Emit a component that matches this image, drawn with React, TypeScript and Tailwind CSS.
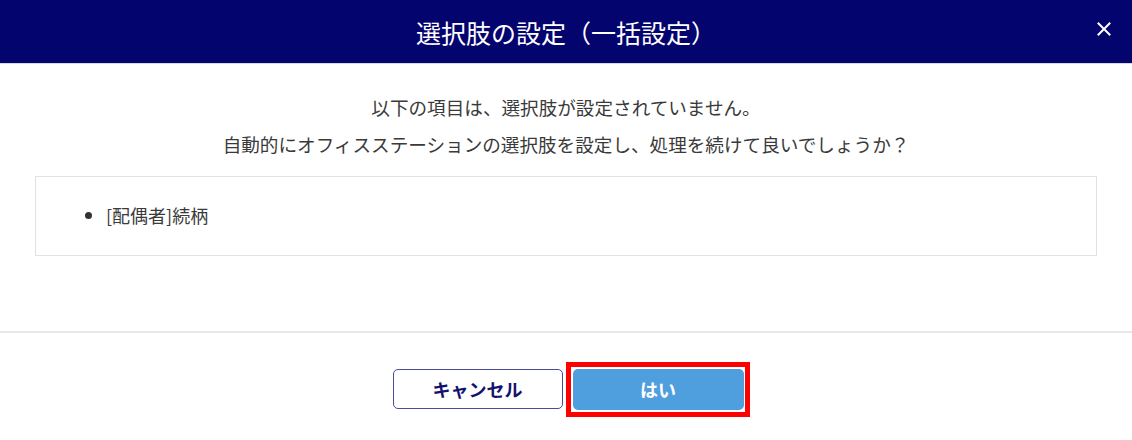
import React from "react";

export default function App() {
  const font = { fontFamily: '"Noto Sans CJK JP", "Noto Sans", sans-serif' };
  return (
    <div className="w-[1132px] h-[440px] bg-white flex flex-col" style={font}>
      <header className="relative h-[64px] bg-[#04046f] border-b border-[#d8d8e4] flex items-center justify-center">
        <h1 className="text-white text-[25px] leading-none pt-[1px]">選択肢の設定（一括設定）</h1>
        <button className="absolute right-[21px] top-[22px] w-[14px] h-[14px] flex items-center justify-center">
          <svg width="14" height="14" viewBox="0 0 14 14" fill="none">
            <path d="M1.5 1.5 L12.5 12.5 M12.5 1.5 L1.5 12.5" stroke="white" strokeWidth="2" strokeLinecap="square" />
          </svg>
        </button>
      </header>
      <div className="pt-[24px] text-center text-[#3a3a3a] text-[18.6px] leading-[37px]">
        <p>以下の項目は、選択肢が設定されていません。</p>
        <p>自動的にオフィスステーションの選択肢を設定し、処理を続けて良いでしょうか？</p>
      </div>
      <div className="px-[35px] pt-[14px]">
        <div className="h-[80px] border border-[#e2e2e2] flex items-center pl-[40px] pb-[2px]">
          <ul className="list-disc text-[#3a3a3a] text-[18px] leading-[26px] pl-[30px] marker:text-[#333]">
            <li>[配偶者]続柄</li>
          </ul>
        </div>
      </div>
      <div className="mt-[75px] h-[2px] bg-[#e8e8e8]" />
      <div className="pt-[36px] flex justify-center gap-[10px] pl-[4px]">
        <button className="w-[170px] h-[40px] rounded-[5px] border-[1.5px] border-[#4a4a9c] bg-white text-[#12126e] text-[18px] font-bold">
          キャンセル
        </button>
        <div className="relative">
          <button className="w-[171px] h-[41px] rounded-[5px] bg-[#4f9edd] text-white text-[18px] font-bold">
            はい
          </button>
          <div className="absolute -left-[7px] -top-[7px] -right-[6px] -bottom-[7px] border-[5px] border-[#ff0000] pointer-events-none" />
        </div>
      </div>
    </div>
  );
}
